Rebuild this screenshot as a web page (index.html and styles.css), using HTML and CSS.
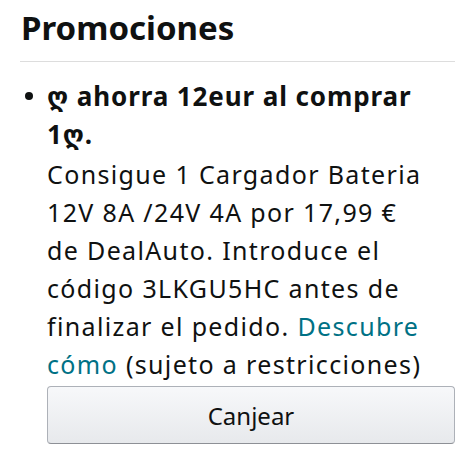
FILE: index.html
```html
<!DOCTYPE html>
<html lang="es">
<head>
    <meta charset="UTF-8">
    <meta name="viewport" content="width=device-width, initial-scale=1.0">
    <title>Promociones</title>
    <link rel="stylesheet" href="styles.css">
</head>
<body>
    <div class="promo-section">
        <h2 class="promo-title">Promociones</h2>
        <ul class="promo-list">
            <li class="promo-item">
                <div class="promo-headline">ღ ahorra 12eur al comprar 1ღ.</div>
                <div class="promo-desc">
                    Consigue 1 Cargador Bateria<br>
                    12V 8A /24V 4A por 17,99 €<br>
                    de DealAuto. Introduce el<br>
                    código 3LKGU5HC antes de<br>
                    finalizar el pedido. <a href="#" class="promo-link">Descubre<br>cómo</a> (sujeto a restricciones)
                </div>
                <button type="button" class="redeem-btn">Canjear</button>
            </li>
        </ul>
    </div>
</body>
</html>
```

FILE: styles.css
```css
body {
    font-family: "Noto Sans", "DejaVu Sans", sans-serif;
    background-color: #fff;
    color: #0f1111;
    margin: 0;
    padding: 0;
}
.promo-section {
    padding: 0 20px;
}
.promo-title {
    font-size: 33px;
    font-weight: 700;
    line-height: 40px;
    margin: 0;
    padding: 8px 0 13px 1px;
    border-bottom: 1px solid #dddddd;
}
.promo-list {
    margin: 0;
    padding: 15px 0 0 27px;
    list-style: none;
}
.promo-item {
    position: relative;
}
.promo-item::before {
    content: "";
    position: absolute;
    left: -22px;
    top: 15px;
    width: 8px;
    height: 8px;
    border-radius: 50%;
    background-color: #0f1111;
}
.promo-headline {
    font-size: 26px;
    font-weight: 700;
    line-height: 38px;
    letter-spacing: 0.9px;
}
.promo-desc {
    font-size: 25px;
    line-height: 38px;
    letter-spacing: 1.35px;
    margin-top: 2px;
}
.promo-link {
    color: #007185;
    text-decoration: none;
}
.redeem-btn {
    display: block;
    width: 100%;
    height: 58px;
    margin-top: 3px;
    font-family: inherit;
    font-size: 24px;
    color: #0f1111;
    background: linear-gradient(to bottom, #f7f8fa, #e7e9ec);
    border: 1px solid #adb1b8;
    border-bottom-color: #8d9096;
    border-radius: 4px;
    cursor: pointer;
}
```
